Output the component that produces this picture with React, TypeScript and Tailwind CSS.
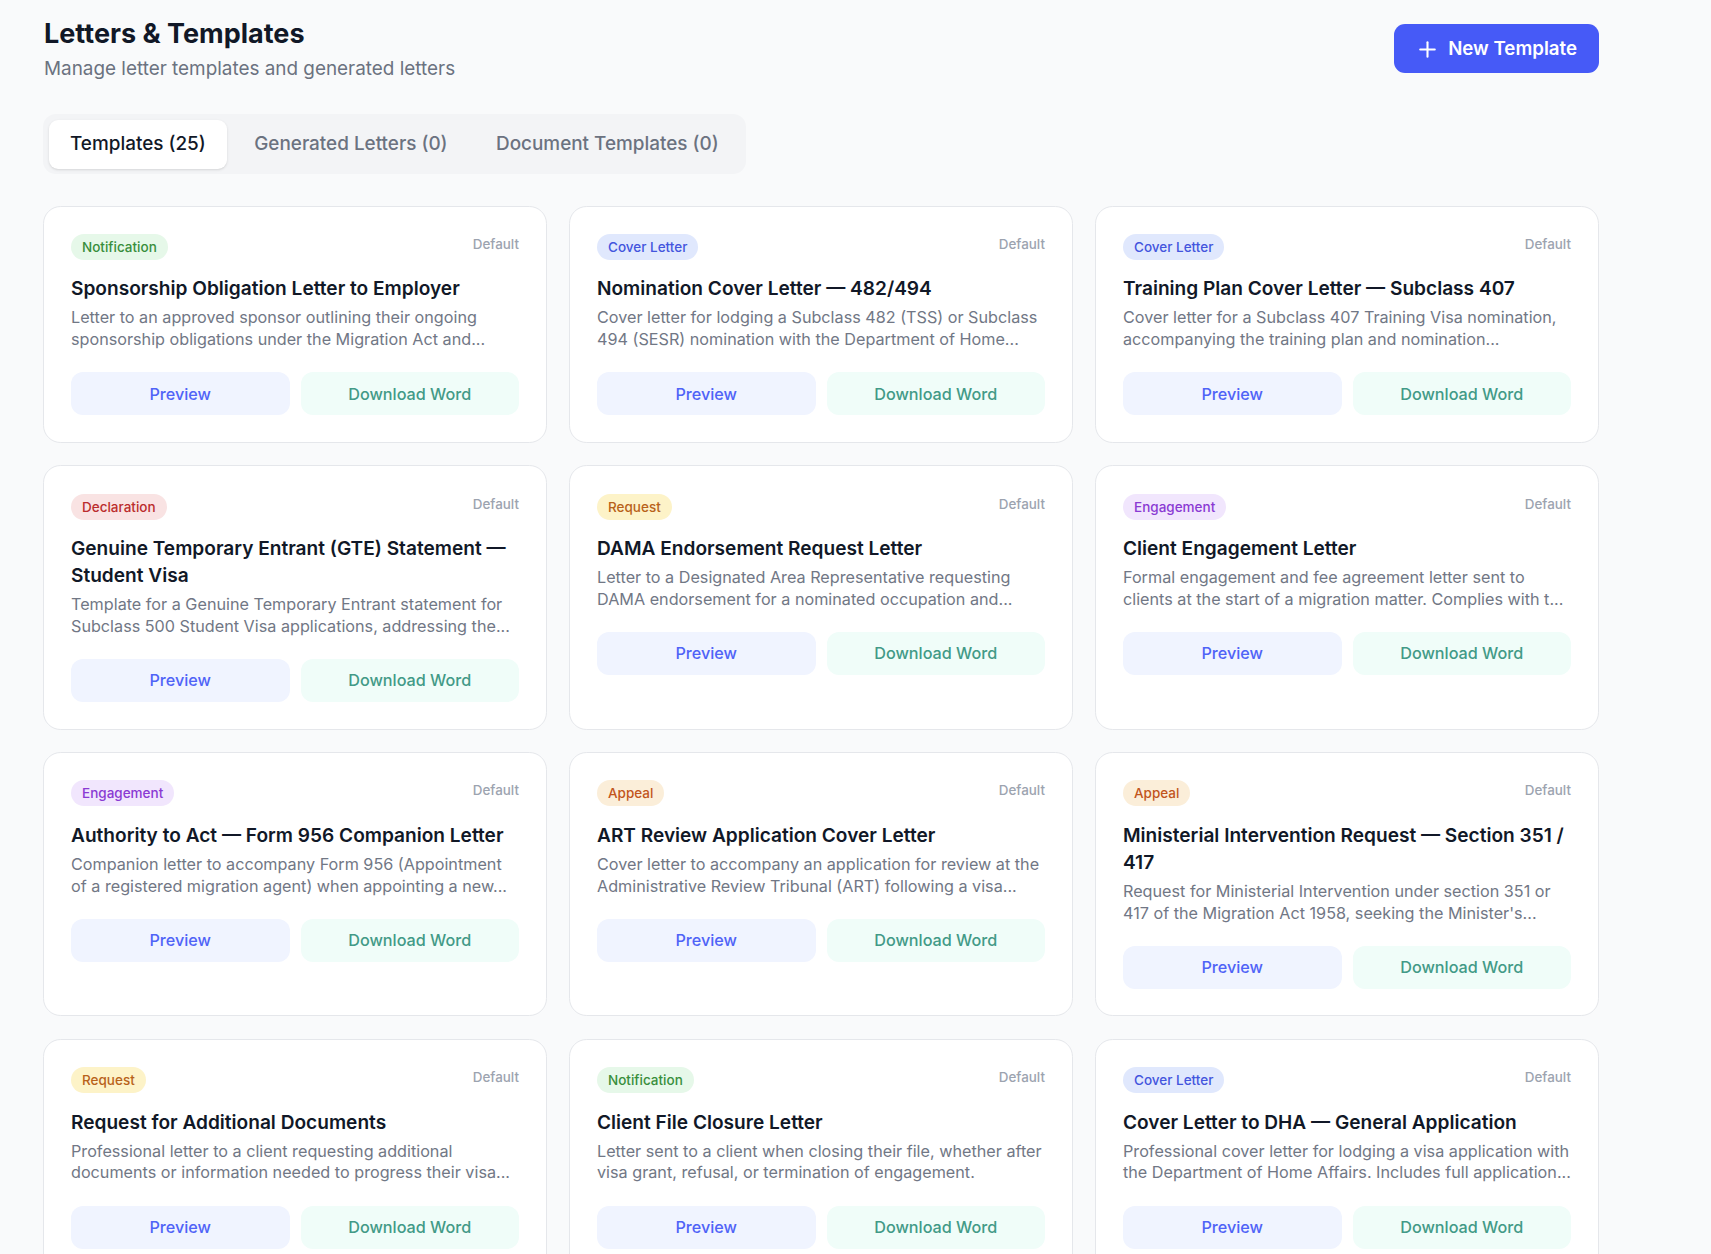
import { Plus } from 'lucide-react';

type Category = 'Notification' | 'Cover Letter' | 'Declaration' | 'Request' | 'Engagement' | 'Appeal';

const BADGE: Record<Category, string> = {
  Notification: 'bg-[#e6f8e9] text-[#388e3c]',
  'Cover Letter': 'bg-[#e0e8fd] text-[#4355dd]',
  Declaration: 'bg-[#f9e3e3] text-[#bb2d2d]',
  Request: 'bg-[#fdf3c8] text-[#b8621a]',
  Engagement: 'bg-[#f1e6fd] text-[#8a3ad3]',
  Appeal: 'bg-[#fbeed9] text-[#c2551c]',
};

const TEMPLATES: { category: Category; title: string; description: string }[] = [
  {
    category: 'Notification',
    title: 'Sponsorship Obligation Letter to Employer',
    description: 'Letter to an approved sponsor outlining their ongoing sponsorship obligations under the Migration Act and...',
  },
  {
    category: 'Cover Letter',
    title: 'Nomination Cover Letter — 482/494',
    description: 'Cover letter for lodging a Subclass 482 (TSS) or Subclass 494 (SESR) nomination with the Department of Home...',
  },
  {
    category: 'Cover Letter',
    title: 'Training Plan Cover Letter — Subclass 407',
    description: 'Cover letter for a Subclass 407 Training Visa nomination, accompanying the training plan and nomination...',
  },
  {
    category: 'Declaration',
    title: 'Genuine Temporary Entrant (GTE) Statement — Student Visa',
    description: 'Template for a Genuine Temporary Entrant statement for Subclass 500 Student Visa applications, addressing the...',
  },
  {
    category: 'Request',
    title: 'DAMA Endorsement Request Letter',
    description: 'Letter to a Designated Area Representative requesting DAMA endorsement for a nominated occupation and...',
  },
  {
    category: 'Engagement',
    title: 'Client Engagement Letter',
    description: 'Formal engagement and fee agreement letter sent to clients at the start of a migration matter. Complies with t...',
  },
  {
    category: 'Engagement',
    title: 'Authority to Act — Form 956 Companion Letter',
    description: 'Companion letter to accompany Form 956 (Appointment of a registered migration agent) when appointing a new...',
  },
  {
    category: 'Appeal',
    title: 'ART Review Application Cover Letter',
    description: 'Cover letter to accompany an application for review at the Administrative Review Tribunal (ART) following a visa...',
  },
  {
    category: 'Appeal',
    title: 'Ministerial Intervention Request — Section 351 / 417',
    description: "Request for Ministerial Intervention under section 351 or 417 of the Migration Act 1958, seeking the Minister's...",
  },
  {
    category: 'Request',
    title: 'Request for Additional Documents',
    description: 'Professional letter to a client requesting additional documents or information needed to progress their visa...',
  },
  {
    category: 'Notification',
    title: 'Client File Closure Letter',
    description: 'Letter sent to a client when closing their file, whether after visa grant, refusal, or termination of engagement.',
  },
  {
    category: 'Cover Letter',
    title: 'Cover Letter to DHA — General Application',
    description: 'Professional cover letter for lodging a visa application with the Department of Home Affairs. Includes full application...',
  },
];

function TemplateCard({ category, title, description }: { category: Category; title: string; description: string }) {
  return (
    <div className="bg-white border border-[#e5e7eb] rounded-[17.6px] px-[27px] pt-[27.4px] pb-[26.4px]">
      <div className="flex justify-between items-start mb-[15.5px]">
        <span className={`rounded-full px-[11px] h-[26px] flex items-center text-[13.5px] font-medium ${BADGE[category]}`}>
          {category}
        </span>
        <span className="text-[13.4px] leading-[20px] font-medium text-[#9ca3af]">Default</span>
      </div>
      <h3 className="text-[19.1px] leading-[27px] font-semibold text-[#111827] mb-[5px]">{title}</h3>
      <p className="text-[16.2px] leading-[21.8px] text-[#717785] mb-[21.4px] mr-[-1px]">{description}</p>
      <div className="flex gap-[11px]">
        <button className="flex-1 h-[43px] rounded-[12px] bg-[#f0f4ff] text-[#4f63f7] text-[16.2px] font-medium">Preview</button>
        <button className="flex-1 h-[43px] rounded-[12px] bg-[#f0fdf9] text-[#429a87] text-[16.2px] font-medium">Download Word</button>
      </div>
    </div>
  );
}

export default function App() {
  return (
    <div className="h-screen overflow-hidden bg-[#f9fafb] pl-[43px] pr-[112px] pt-[16px] font-['Inter',sans-serif]">
      <div className="flex justify-between items-start mb-[31px]">
        <div className="pl-[1px]">
          <h1 className="text-[27px] leading-[36px] font-bold text-[#111827]">Letters &amp; Templates</h1>
          <p className="text-[18.9px] leading-[28px] mt-[3px] text-[#6b7280]">Manage letter templates and generated letters</p>
        </div>
        <button className="flex items-center gap-[8px] h-[49px] mt-[8px] pt-[1px] pl-[21px] pr-[22px] rounded-[11px] bg-[#465af7] text-white text-[18.7px] font-semibold">
          <Plus size={25} strokeWidth={2} />
          New Template
        </button>
      </div>

      <div className="flex w-fit gap-[5.5px] p-[5.5px] rounded-[13px] bg-[#f3f4f6] mb-[31.5px]">
        <button className="h-[49px] pt-[1px] px-[21.5px] rounded-[9px] bg-white shadow-sm text-[18.9px] font-medium text-[#111827]">Templates (25)</button>
        <button className="h-[49px] pt-[1px] px-[21.5px] rounded-[9px] text-[18.9px] font-medium text-[#6b7280]">Generated Letters (0)</button>
        <button className="h-[49px] pt-[1px] px-[21.5px] rounded-[9px] text-[18.9px] font-medium text-[#6b7280]">Document Templates (0)</button>
      </div>

      <div className="grid grid-cols-3 gap-x-[22px] gap-y-[22.5px]">
        {TEMPLATES.map((t) => (
          <TemplateCard key={t.title} {...t} />
        ))}
      </div>
    </div>
  );
}
